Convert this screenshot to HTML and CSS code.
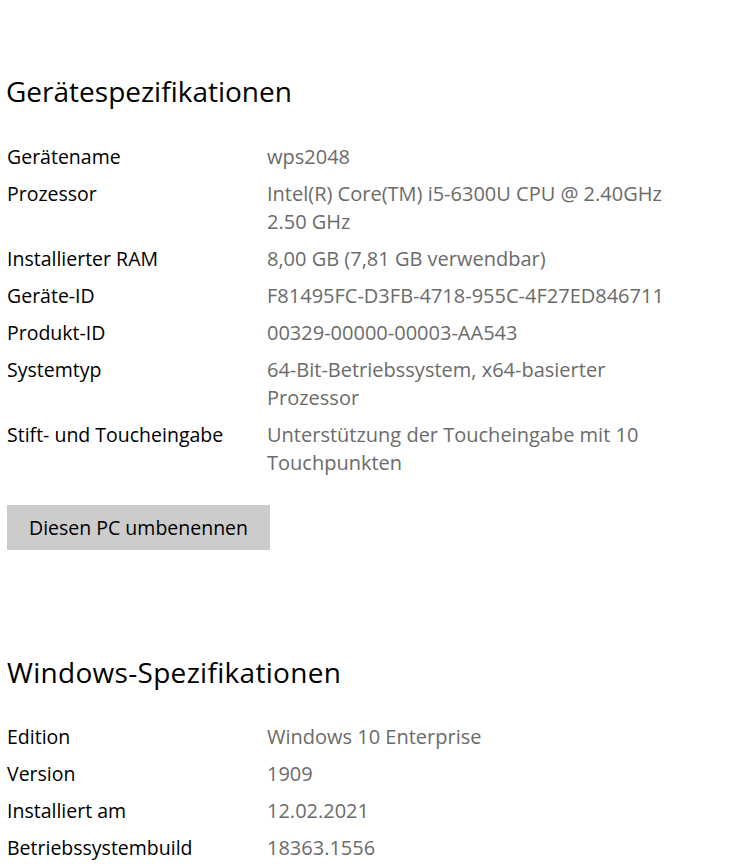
FILE: index.html
```html
<!DOCTYPE html>
<html lang="de">
<head>
<meta charset="utf-8">
<title>Info</title>
<link rel="stylesheet" href="styles.css">
</head>
<body>
<main class="page">
  <section class="section">
    <h2 class="heading">Gerätespezifikationen</h2>
    <dl class="specs">
      <div class="row"><dt>Gerätename</dt><dd>wps2048</dd></div>
      <div class="row"><dt>Prozessor</dt><dd>Intel(R) Core(TM) i5-6300U CPU @ 2.40GHz 2.50 GHz</dd></div>
      <div class="row"><dt>Installierter RAM</dt><dd>8,00 GB (7,81 GB verwendbar)</dd></div>
      <div class="row"><dt>Geräte-ID</dt><dd>F81495FC-D3FB-4718-955C-4F27ED846711</dd></div>
      <div class="row"><dt>Produkt-ID</dt><dd>00329-00000-00003-AA543</dd></div>
      <div class="row"><dt>Systemtyp</dt><dd>64-Bit-Betriebssystem, x64-basierter Prozessor</dd></div>
      <div class="row"><dt>Stift- und Toucheingabe</dt><dd>Unterstützung der Toucheingabe mit 10 Touchpunkten</dd></div>
    </dl>
    <button class="btn" type="button">Diesen PC umbenennen</button>
  </section>
  <section class="section section-win">
    <h2 class="heading">Windows-Spezifikationen</h2>
    <dl class="specs">
      <div class="row"><dt>Edition</dt><dd>Windows 10 Enterprise</dd></div>
      <div class="row"><dt>Version</dt><dd>1909</dd></div>
      <div class="row"><dt>Installiert am</dt><dd>12.02.2021</dd></div>
      <div class="row"><dt>Betriebssystembuild</dt><dd>18363.1556</dd></div>
    </dl>
  </section>
</main>
</body>
</html>
```

FILE: styles.css
```css
html, body {
  margin: 0;
  padding: 0;
  background: #ffffff;
}
body {
  font-family: "Open Sans", "Noto Sans", sans-serif;
  color: #000000;
  overflow: hidden;
}
.page {
  padding: 71px 0 0 7px;
}
.heading {
  margin: 0;
  font-size: 28px;
  line-height: 40px;
  font-weight: 400;
  margin-left: -1px;
}
.specs {
  margin: 32px 0 0 0;
  display: flex;
  flex-direction: column;
  gap: 9px;
}
.row {
  display: grid;
  grid-template-columns: 260px 420px;
  font-size: 19.5px;
  line-height: 28px;
}
.row dt, .row dd {
  margin: 0;
}
.row dd {
  color: #6b6b6b;
  font-size: 20px;
}
.btn {
  margin-top: 28px;
  display: block;
  width: 263px;
  height: 45px;
  padding: 0;
  border: 0;
  background: #cccccc;
  color: #000000;
  font-family: inherit;
  font-size: 19.5px;
  line-height: 28px;
}
.section-win {
  margin-top: 102px;
}
.section-win .heading {
  margin-left: 0;
  letter-spacing: 0.3px;
}
.section-win .specs {
  margin-top: 31px;
}
```
